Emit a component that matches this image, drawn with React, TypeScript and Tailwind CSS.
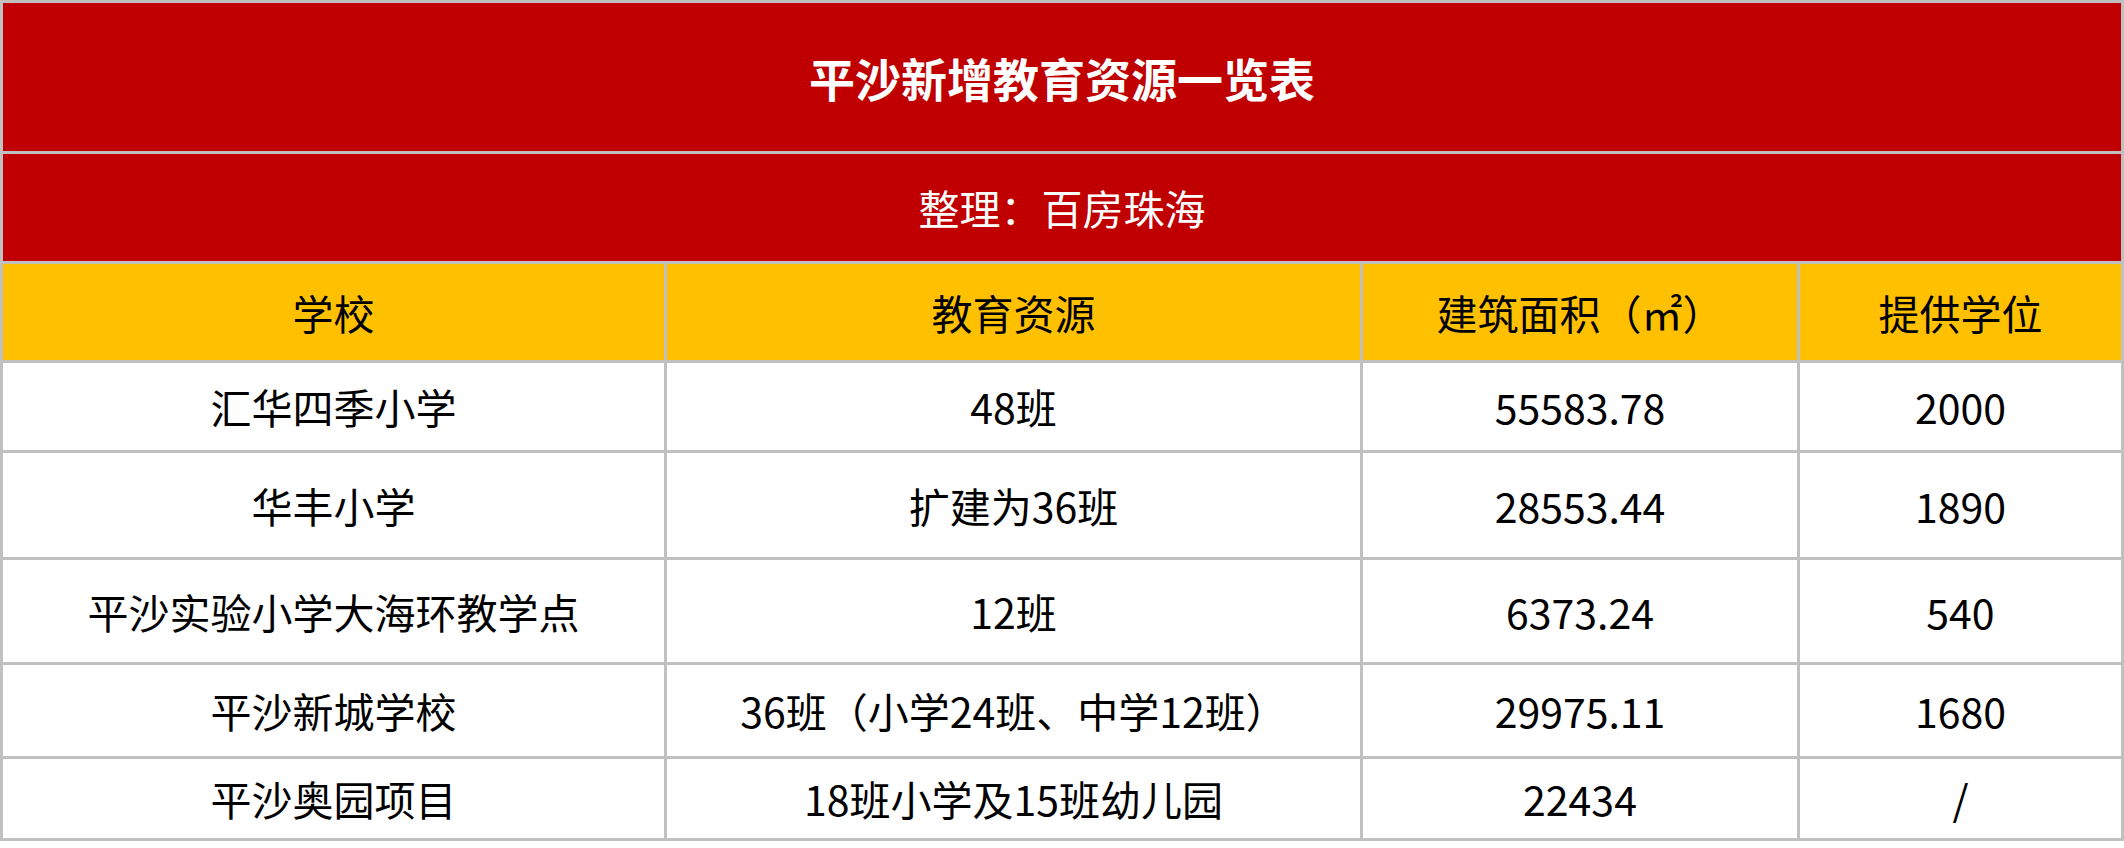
import React from 'react';

const rows = [
  ['汇华四季小学', '48班', '55583.78', '2000'],
  ['华丰小学', '扩建为36班', '28553.44', '1890'],
  ['平沙实验小学大海环教学点', '12班', '6373.24', '540'],
  ['平沙新城学校', '36班（小学24班、中学12班）', '29975.11', '1680'],
  ['平沙奥园项目', '18班小学及15班幼儿园', '22434', '/'],
];

const headers = ['学校', '教育资源', '建筑面积（㎡）', '提供学位'];

const font = { fontFamily: '"Noto Sans CJK SC", "Noto Sans", sans-serif' };

export default function App() {
  return (
    <div className="w-[2124px] h-[848px] bg-white" style={font}>
      <div className="grid w-[2124px] grid-cols-[661px_693px_434px_321px] grid-rows-[148px_107px_96px_87px_104px_102px_91px_79px] gap-[3px] border-[3px] border-[#c0c0c0] bg-[#c0c0c0] text-[41px] leading-none text-black">
        <div className="col-span-4 flex items-center justify-center bg-[#c00000] text-[46px] font-bold text-white">
          平沙新增教育资源一览表
        </div>
        <div className="col-span-4 flex items-center justify-center bg-[#c00000] text-white">
          整理：百房珠海
        </div>
        {headers.map((h) => (
          <div key={h} className="flex items-center justify-center bg-[#ffc000]">
            {h}
          </div>
        ))}
        {rows.map((r, i) =>
          r.map((c, j) => (
            <div key={`${i}-${j}`} className="flex items-center justify-center bg-white">
              {c}
            </div>
          ))
        )}
      </div>
    </div>
  );
}
